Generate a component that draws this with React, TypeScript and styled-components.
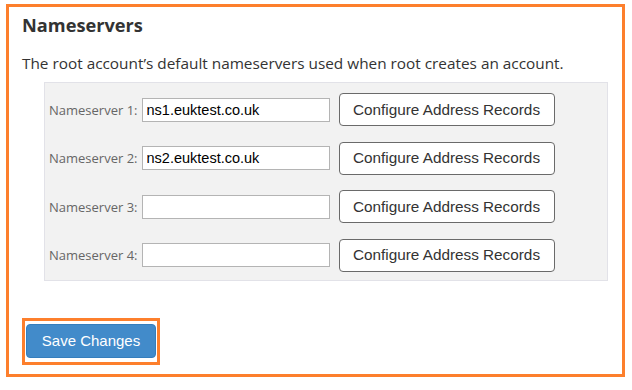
import React from "react";
import styled, { createGlobalStyle } from "styled-components";

const GlobalStyle = createGlobalStyle`
  html, body {
    margin: 0;
    padding: 0;
    background: #ffffff;
  }
  * { box-sizing: border-box; }
`;

const Frame = styled.section`
  margin: 4px 0 0 6px;
  width: 619px;
  height: 373px;
  border: 3px solid #fd7f2c;
  padding: 6px 0 0 13px;
  font-family: "Open Sans", "DejaVu Sans", sans-serif;
  color: #333333;
`;

const Heading = styled.h2`
  margin: 0;
  font-size: 18.2px;
  font-weight: 700;
  line-height: 24px;
  color: #333333;
`;

const Description = styled.p`
  margin: 16px 0 0 0;
  font-size: 15.35px;
  line-height: 20px;
  color: #333333;
  white-space: nowrap;
`;

const Panel = styled.div`
  margin: 9px 0 0 22px;
  width: 564px;
  background: #f2f2f2;
  border: 1px solid #e2e2e8;
  padding: 10px 0 8px 4px;
  display: flex;
  flex-direction: column;
  gap: 15.67px;
`;

const Row = styled.div`
  display: flex;
  align-items: center;
  height: 33px;
`;

const Label = styled.label`
  font-family: "Open Sans", "DejaVu Sans", sans-serif;
  font-size: 13px;
  color: #666666;
  margin-right: 4px;
  white-space: nowrap;
`;

const TextInput = styled.input`
  width: 188px;
  height: 24px;
  border: 1px solid #b4b4b4;
  background: #ffffff;
  padding: 0 4px;
  font-family: "Liberation Sans", Arial, sans-serif;
  font-size: 14.5px;
  color: #000000;
  outline: none;
`;

const ConfigButton = styled.button`
  margin-left: 9px;
  width: 216px;
  height: 33px;
  padding: 0;
  border: 1px solid #6a6a6a;
  border-radius: 4px;
  background: #ffffff;
  font-family: "Liberation Sans", Arial, sans-serif;
  font-size: 15.3px;
  color: #333333;
  cursor: pointer;
`;

const Highlight = styled.div`
  margin-top: 37px;
  display: inline-flex;
  border: 3px solid #fd7f2c;
  padding: 3px 1px 4px 1px;
`;

const PrimaryButton = styled.button`
  width: 130px;
  height: 34px;
  padding: 0;
  border: 1px solid #357ebd;
  border-radius: 4px;
  background: #428bca;
  color: #ffffff;
  font-family: "Liberation Sans", Arial, sans-serif;
  font-size: 15px;
  cursor: pointer;
`;

const servers = ["ns1.euktest.co.uk", "ns2.euktest.co.uk", "", ""];

export default function App() {
  return (
    <>
      <GlobalStyle />
      <Frame>
        <Heading>Nameservers</Heading>
        <Description>
          The root account’s default nameservers used when root creates an account.
        </Description>
        <Panel>
          {servers.map((value, i) => (
            <Row key={i}>
              <Label htmlFor={`ns${i + 1}`}>Nameserver {i + 1}:</Label>
              <TextInput id={`ns${i + 1}`} defaultValue={value} />
              <ConfigButton type="button">Configure Address Records</ConfigButton>
            </Row>
          ))}
        </Panel>
        <Highlight>
          <PrimaryButton type="button">Save Changes</PrimaryButton>
        </Highlight>
      </Frame>
    </>
  );
}
